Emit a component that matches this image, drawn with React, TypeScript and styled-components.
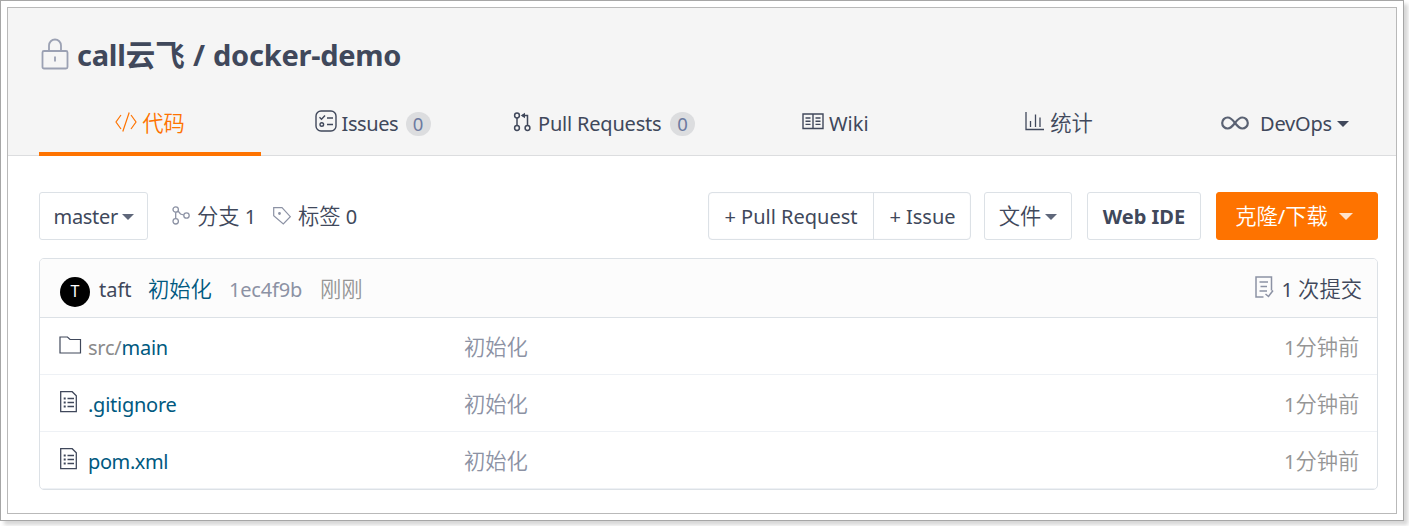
import React from "react";
import styled, { createGlobalStyle } from "styled-components";

const ink = "#40485b";
const soft = "#8c92a4";
const orange = "#fe7300";
const line = "#dce1e6";

const Global = createGlobalStyle`
  * { box-sizing: border-box; }
  html, body { margin: 0; background: #fff; overflow: hidden; }
  body { min-height: 526px; font-family: "Noto Sans", "Noto Sans CJK SC", sans-serif; font-size: 20px; color: ${ink}; }
`;

const Frame = styled.div`
  width: 1404px; height: 521px; padding: 6px;
  border: 1px solid #a6a6a6; background: #fff;
  box-shadow: 4px 4px 4px rgba(0, 0, 0, 0.16);
`;
const Page = styled.div`
  height: 507px; border: 1px solid #b9b9b9; background: #fff;
`;
const Header = styled.header`
  height: 148px; background: #f5f5f5; border-bottom: 1px solid #dcdddf;
  display: flex; flex-direction: column; justify-content: space-between;
`;
const TitleRow = styled.div`
  display: flex; align-items: center; height: 44px; margin-top: 25px; padding-left: 33px;
`;
const Title = styled.h1`
  margin: 0 0 0 8px; font-size: 29px; line-height: 44px; font-weight: 700;
  letter-spacing: -0.25px; word-spacing: 1px; white-space: nowrap;
`;
const Tabs = styled.nav`
  display: flex; height: 64px; margin-bottom: -1px; padding-left: 31px;
`;
const Tab = styled.a<{ $w: number; $active?: boolean }>`
  flex: none; width: ${p => p.$w}px; height: 64px; padding-top: ${p => (p.$active ? 4 : 0)}px;
  display: flex; align-items: center; justify-content: center;
  color: ${p => (p.$active ? orange : ink)};
  border-bottom: ${p => (p.$active ? `4px solid ${orange}` : "0")};
`;
const Text = styled.span<{ $w?: number; $ls?: number; $ml?: number; $color?: string; $bold?: boolean }>`
  display: inline-block; flex: none; white-space: nowrap; line-height: 28px;
  width: ${p => (p.$w ? `${p.$w}px` : "auto")};
  letter-spacing: ${p => p.$ls ?? 0}px;
  margin-left: ${p => p.$ml ?? 0}px;
  color: ${p => p.$color ?? "inherit"};
  font-weight: ${p => (p.$bold ? 700 : 400)};
`;
const Han = styled.span<{ $size?: number; $weight?: number }>`
  font-family: "Noto Sans CJK SC", sans-serif; line-height: 0; letter-spacing: 0;
  font-size: ${p => p.$size ?? 21.3}px; font-weight: ${p => p.$weight ?? 350};
`;
const Glyph = styled.svg<{ $lift?: number; $ml?: number; $color?: string }>`
  display: block; flex: none; fill: none; stroke: currentColor; overflow: visible;
  color: ${p => p.$color ?? "inherit"};
  margin-left: ${p => p.$ml ?? 0}px; margin-bottom: ${p => p.$lift ?? 0}px;
`;
const Count = styled.span`
  flex: none; width: 25px; height: 24px; margin-left: 9px; border-radius: 12px; background: #dcdddf;
  color: #6c7aa0; font-size: 18.5px; line-height: 24px; text-align: center;
`;
const Caret = styled.i<{ $ml?: number; $color?: string; $half?: number }>`
  flex: none; width: 0; height: 0; margin-left: ${p => p.$ml ?? 5}px;
  border: ${p => p.$half ?? 6}px solid transparent; border-bottom: 0;
  border-top-color: ${p => p.$color ?? "#5f677a"};
`;
const Toolbar = styled.div`
  display: flex; height: 48px; margin: 36px 18px 0 31px;
`;
const Button = styled.button<{ $w: number; $ml?: number; $primary?: boolean }>`
  width: ${p => p.$w}px; height: 48px; margin: 0 0 0 ${p => p.$ml ?? 0}px;
  padding: 1px ${p => (p.$primary ? 6 : 0)}px 0 0;
  display: flex; align-items: center; justify-content: center;
  font: inherit; color: ${p => (p.$primary ? "#fff" : ink)};
  background: ${p => (p.$primary ? orange : "#fff")};
  border: 1px solid ${p => (p.$primary ? orange : line)}; border-radius: 3px;
`;
const Stat = styled.div<{ $ml: number }>`
  display: flex; align-items: center; margin-left: ${p => p.$ml}px; padding-top: 1px;
`;
const Spacer = styled.div`flex: 1;`;
const Group = styled.div`
  display: flex; width: 263px; height: 48px; border: 1px solid ${line}; border-radius: 4px;
  box-shadow: inset 0 0 1px ${line};
`;
const GroupItem = styled.button<{ $w: number }>`
  flex: none; width: ${p => p.$w}px; padding: 1px 0 0; border: 0; background: none; font: inherit; color: inherit;
  display: flex; align-items: center; justify-content: center;
  & + & { border-left: 1px solid ${line}; }
`;
const Panel = styled.section`
  height: 232px; margin: 18px 18px 0 31px; border: 1px solid ${line}; border-radius: 5px; overflow: hidden;
`;
const CommitBar = styled.div`
  display: flex; align-items: center; height: 59px; padding: 4px 15px 0 20px;
  background: #fcfcfc; border-bottom: 1px solid ${line};
`;
const Avatar = styled.span`
  flex: none; width: 30px; height: 30px; margin-top: 4px; border-radius: 50%; background: #000; color: #fff;
  font-size: 16px; line-height: 29px; text-align: center;
`;
const Row = styled.div`
  display: grid; grid-template-columns: 48px 376px 1fr 75px; align-items: center;
  height: 57px; padding: 3px 18px 0 0; border-bottom: 1px solid #eef1f5;
`;
const IconCell = styled.div`display: flex; padding-left: 19px;`;
const Muted = styled.span`color: #8a8a8a;`;

const Lock = () => (
  <Glyph $color="#9ba1b3" $lift={2} width="28" height="32" viewBox="0 0 28 32" strokeWidth="1.8">
    <rect x="1.500" y="13" width="25" height="17.500" rx="1.500" />
    <path d="M8 13V7.500a6 6 0 0 1 12 0V13M14 18.500v5" />
  </Glyph>
);
const CodeIcon = () => (
  <Glyph $lift={5} width="22" height="22" viewBox="0 0 22 22" strokeWidth="1.2">
    <path d="M6 4 1 11l5 7M16 4l5 7-5 7M14.2 1.5 7.8 20.5" />
  </Glyph>
);
const IssuesIcon = () => (
  <Glyph $lift={6} width="22" height="22" viewBox="0 0 22 22" strokeWidth="1.4">
    <rect x="1" y="1" width="20" height="20" rx="5" />
    <path d="m4.500 7.200 2 2L10 5.500M12 8h6M12 14.500h6" />
    <circle cx="6.800" cy="14.500" r="1.800" />
  </Glyph>
);
const PullIcon = () => (
  <Glyph $lift={5} width="18" height="20" viewBox="0 0 18 20" strokeWidth="1.5">
    <circle cx="4" cy="3.500" r="2.400" /><circle cx="4" cy="16" r="2.400" /><circle cx="14.500" cy="16" r="2.400" />
    <path d="M4 6v7.500M14.500 13.500V3.500H9" /><path d="M12 .8v5.400L7.800 3.500z" fill="currentColor" stroke="none" />
  </Glyph>
);
const WikiIcon = () => (
  <Glyph $lift={5} width="22" height="17" viewBox="0 0 22 17" strokeWidth="1.4">
    <path d="M1 1h20v14.500H1zM11 1v14.500M3.500 5h5M3.500 8.200h5M3.500 11.400h5M13.500 5h5M13.500 8.200h5M13.500 11.400h5" />
  </Glyph>
);
const ChartIcon = () => (
  <Glyph $lift={5} width="19" height="19" viewBox="0 0 19 19" strokeWidth="1.3">
    <path d="M1 0v17.500h18M5.500 9v6M10.500 2.500V15M15 5.500V15" />
  </Glyph>
);
const InfinityIcon = () => (
  <Glyph $color="#5a6273" $lift={3} width="28" height="14" viewBox="0 0 28 14" strokeWidth="2.200">
    <path d="M14 7C11 3 9.500 1.500 6.700 1.500a5.500 5.500 0 0 0 0 11C9.500 12.500 11 11 14 7s4.500-5.500 7.300-5.500a5.500 5.500 0 0 1 0 11C18.500 12.500 17 11 14 7Z" />
  </Glyph>
);
const BranchIcon = () => (
  <Glyph $color={soft} $lift={3} width="18" height="19" viewBox="0 0 18 19" strokeWidth="1.300">
    <circle cx="3.700" cy="3.500" r="2.700" /><circle cx="3.700" cy="15.300" r="2.700" /><circle cx="14.500" cy="9.500" r="2.700" />
    <path d="M3.700 6.200v6.400M6 5l2.500 3 3.300 1" />
  </Glyph>
);
const TagIcon = () => (
  <Glyph $color={soft} $ml={17} $lift={2} width="18" height="18" viewBox="0 0 18 18" strokeWidth="1.200">
    <path d="M.7.7H9l8.300 9-7 7.300L.7 8.700z" /><circle cx="6.500" cy="6.500" r=".8" fill="currentColor" />
  </Glyph>
);
const CommitsIcon = () => (
  <Glyph $color={soft} $lift={7} width="19" height="22" viewBox="0 0 19 22" strokeWidth="1.500">
    <path d="M8.500 21H1V1h15.500v13.500M4.500 6H13M5.500 10.500H12M4.500 15H12M10.500 18l3 2.500 4.500-6" />
  </Glyph>
);
const FolderIcon = () => (
  <Glyph $lift={6} width="22" height="18" viewBox="0 0 22 18" strokeWidth="1.200">
    <path d="M1 1h7.500l2.500 2.500h10.500V17H1z" />
  </Glyph>
);
const FileIcon = () => (
  <Glyph $ml={1} $lift={5} width="18" height="22" viewBox="0 0 18 22" strokeWidth="1.300">
    <path d="M.7.7h11.500L16.300 4.700v16H.7z" />
    <path d="M7.500 7.500H14M7.500 11.500H14M7.500 15.500H14" /><path d="M3.700 7.500h2M3.700 11.500h2M3.700 15.500h2" strokeWidth="2" />
  </Glyph>
);

const files = [
  { dir: "src/", name: "main", folder: true, ls: -0.25 },
  { dir: "", name: ".gitignore", folder: false, ls: -0.25 },
  { dir: "", name: "pom.xml", folder: false, ls: -0.4 },
];

export default function App() {
  return (
    <>
      <Global />
      <Frame>
        <Page>
          <Header>
            <TitleRow>
              <Lock />
              <Title>call<Han $size={29.5} $weight={700}>云飞</Han> / docker-demo</Title>
            </TitleRow>
            <Tabs>
              <Tab $w={222} $active><CodeIcon /><Text $ml={5}><Han>代码</Han></Text></Tab>
              <Tab $w={223}><IssuesIcon /><Text $ml={5} $w={55} $ls={-0.4}>Issues</Text><Count>0</Count></Tab>
              <Tab $w={240}><PullIcon /><Text $ml={7} $w={123} $ls={-0.2}>Pull Requests</Text><Count>0</Count></Tab>
              <Tab $w={223}><WikiIcon /><Text $ml={5} $w={40}>Wiki</Text></Tab>
              <Tab $w={224}><ChartIcon /><Text $ml={6}><Han>统计</Han></Text></Tab>
              <Tab $w={228}><InfinityIcon /><Text $ml={11} $w={73} $ls={-0.2}>DevOps</Text><Caret $ml={4} $color={ink} /></Tab>
            </Tabs>
          </Header>
          <Toolbar>
            <Button $w={109}><Text $w={64} $ls={-0.3}>master</Text><Caret $ml={4} /></Button>
            <Stat $ml={24}>
              <BranchIcon /><Text $ml={7} $w={59}><Han>分支</Han> 1</Text>
              <TagIcon /><Text $ml={7}><Han>标签</Han> 0</Text>
            </Stat>
            <Spacer />
            <Group>
              <GroupItem $w={164}><Text>+ Pull Request</Text></GroupItem>
              <GroupItem $w={98}><Text>+ Issue</Text></GroupItem>
            </Group>
            <Button $w={88} $ml={13}><Text><Han>文件</Han></Text><Caret $ml={4} /></Button>
            <Button $w={114} $ml={15}><Text $bold>Web IDE</Text></Button>
            <Button $w={162} $ml={15} $primary><Text><Han>克隆</Han>/<Han>下载</Han></Text><Caret $ml={11} $half={7} $color="#ffe3cc" /></Button>
          </Toolbar>
          <Panel>
            <CommitBar>
              <Avatar>T</Avatar>
              <Text $ml={9} $w={49}>taft</Text>
              <Text $w={81} $color="#005980"><Han>初始化</Han></Text>
              <Text $w={91} $color={soft} $ls={-0.2}>1ec4f9b</Text>
              <Text $color="#959595"><Han>刚刚</Han></Text>
              <Spacer />
              <CommitsIcon /><Text $ml={7}>1 <Han>次提交</Han></Text>
            </CommitBar>
            {files.map(f => (
              <Row key={f.name}>
                <IconCell>{f.folder ? <FolderIcon /> : <FileIcon />}</IconCell>
                <Text $ls={f.ls} $color="#005980"><Muted>{f.dir}</Muted>{f.name}</Text>
                <Text $color={soft}><Han>初始化</Han></Text>
                <Text $color="#959595">1<Han>分钟前</Han></Text>
              </Row>
            ))}
          </Panel>
        </Page>
      </Frame>
    </>
  );
}
